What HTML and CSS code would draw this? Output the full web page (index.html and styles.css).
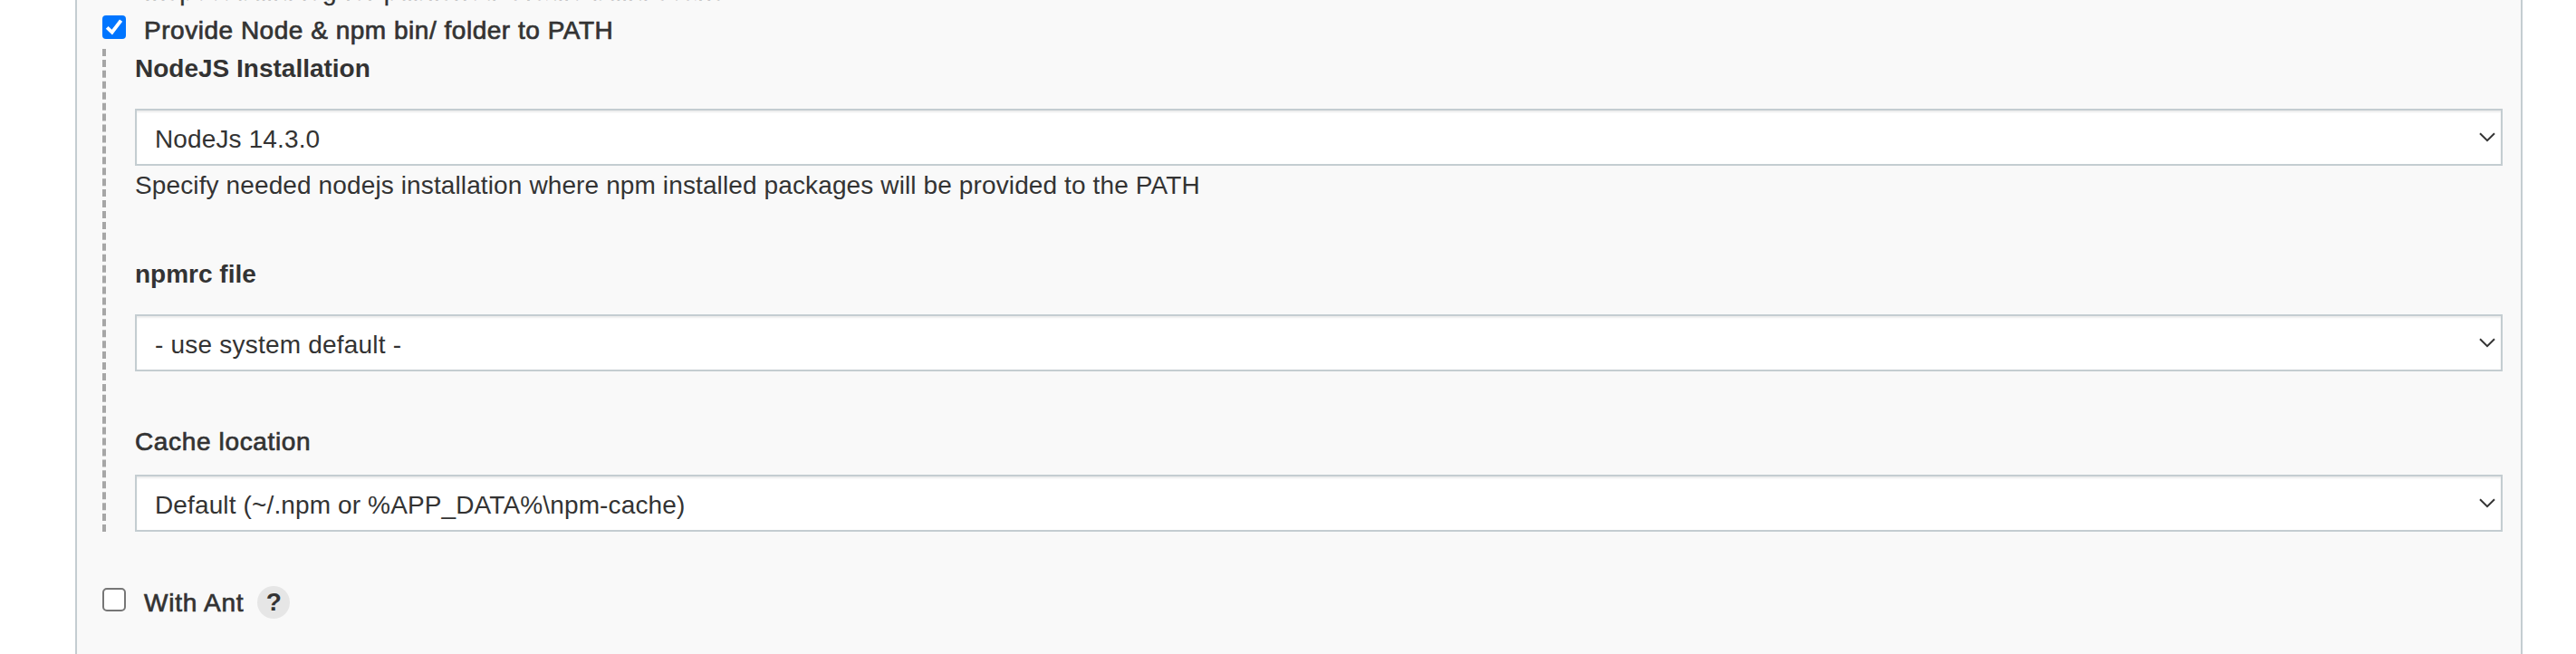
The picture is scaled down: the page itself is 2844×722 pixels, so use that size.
FILE: index.html
```html
<!DOCTYPE html>
<html lang="en">
<head>
<meta charset="utf-8">
<title>Build Environment</title>
<link rel="stylesheet" href="styles.css">
</head>
<body>
<main class="panel">
  <div class="row row-scans"><span class="label medium scans">Inspect build log for published Gradle build scans</span></div>
  <div class="row row-node">
    <span class="check checked"><svg viewBox="0 0 26 26"><path d="M5.2 13.4 L10.7 18.6 L20.6 5.6" fill="none" stroke="#fff" stroke-width="4"/></svg></span>
    <span class="label medium provide">Provide Node &amp; npm bin/ folder to PATH</span>
  </div>
  <section class="nested">
    <div class="label bold install">NodeJS Installation</div>
    <div class="select"><span class="value">NodeJs 14.3.0</span><svg class="chevron" viewBox="0 0 18 11"><path d="M1 1.2 L9 9.2 L17 1.2"/></svg></div>
    <div class="label help">Specify needed nodejs installation where npm installed packages will be provided to the PATH</div>
    <div class="label bold npmrc">npmrc file</div>
    <div class="select"><span class="value value-npmrc">- use system default -</span><svg class="chevron" viewBox="0 0 18 11"><path d="M1 1.2 L9 9.2 L17 1.2"/></svg></div>
    <div class="label medium cache">Cache location</div>
    <div class="select"><span class="value">Default (~/.npm or %APP_DATA%\npm-cache)</span><svg class="chevron" viewBox="0 0 18 11"><path d="M1 1.2 L9 9.2 L17 1.2"/></svg></div>
  </section>
  <div class="row row-ant">
    <span class="check"></span>
    <span class="label medium ant">With Ant</span>
    <span class="help-button">?</span>
  </div>
</main>
</body>
</html>
```
FILE: styles.css
```css
* { box-sizing: border-box; }
html, body { margin: 0; height: 722px; overflow: hidden; background: #fff; }
body {
  font-family: "Liberation Sans", Arial, sans-serif;
  font-size: 28px;
  line-height: 32px;
  color: #333;
}
.panel {
  width: 2702px;
  height: 722px;
  margin-left: 83px;
  padding: 0 20px 0 28px;
  border: solid #c4cdd1;
  border-width: 0 2px;
  background: #f9f9f9;
  overflow: hidden;
}
.label { display: block; white-space: nowrap; }
.medium { -webkit-text-stroke: 0.7px #333; }
.bold { font-weight: 700; }
.row { display: flex; align-items: flex-start; }
.row-scans { height: 17px; padding-left: 46px; }
.scans { margin-top: -25px; letter-spacing: 0.64px; -webkit-text-stroke-width: 0.3px; }
.row-node { height: 37px; }
.check {
  width: 26px;
  height: 26px;
  margin-right: 20px;
  border: 2px solid #767676;
  border-radius: 5px;
  background: #fff;
}
.checked { border: 0; border-radius: 4px; background: #0075ff; }
.check svg { display: block; width: 26px; height: 26px; }
.provide { padding-top: 1px; letter-spacing: 0.52px; }
.nested {
  height: 533px;
  padding-left: 32px;
  border-left: 4px dashed #a6a6a6;
}
.install { height: 66px; padding-top: 6px; }
.select {
  display: flex;
  align-items: center;
  justify-content: space-between;
  width: 2614px;
  height: 63px;
  padding: 0 6px 0 20px;
  border: 2px solid #c4cdd1;
  background: #fff;
  box-shadow: inset 0 2px 2px rgba(0, 0, 0, 0.075);
}
.value { padding-top: 4px; letter-spacing: 0.13px; }
.value-npmrc { letter-spacing: 0.21px; }
.chevron { width: 18px; height: 11px; }
.chevron path { fill: none; stroke: #333; stroke-width: 2; }
.help { height: 104px; padding-top: 6px; letter-spacing: 0.12px; }
.npmrc { height: 60px; }
.cache { height: 114px; padding-top: 62px; letter-spacing: 0.64px; }
.row-ant { padding-top: 62px; }
.ant { padding-top: 1px; letter-spacing: 0.75px; }
.help-button {
  width: 36px;
  height: 36px;
  margin: -2px 0 0 15px;
  border-radius: 50%;
  background: #e6e6e6;
  font-weight: 700;
  line-height: 36px;
  text-align: center;
}
```
